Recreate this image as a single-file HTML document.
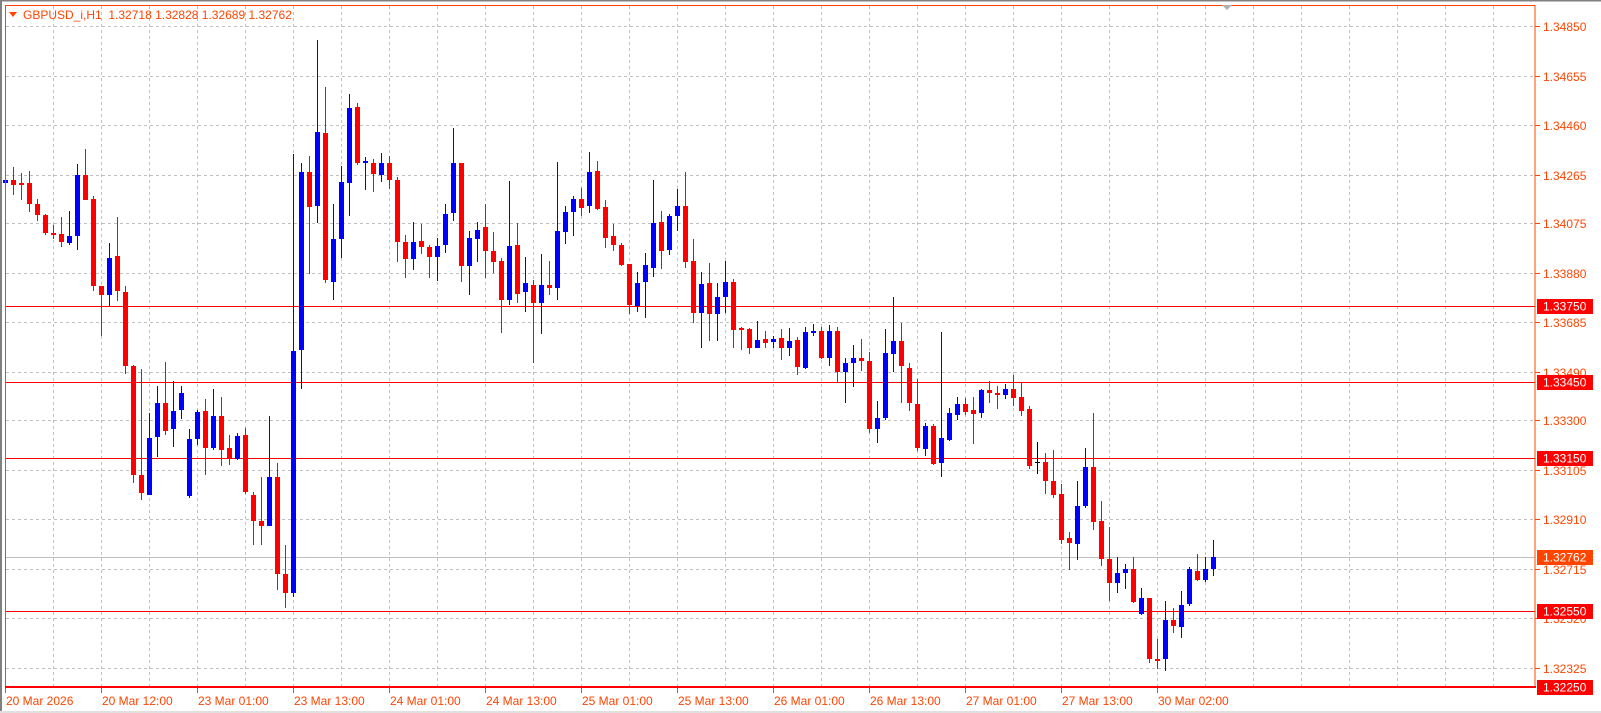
<!DOCTYPE html>
<html><head><meta charset="utf-8"><style>
html,body{margin:0;padding:0;background:#fff;overflow:hidden}
svg{display:block}
text{font-family:"Liberation Sans",sans-serif;font-size:12px}
</style></head><body>
<svg id="s" width="1601" height="713" viewBox="0 0 1601 713" xmlns="http://www.w3.org/2000/svg">
<rect x="0" y="0" width="1601" height="713" fill="#fff"/>
<line x1="0" y1="0.5" x2="1601" y2="0.5" stroke="#808080" stroke-width="2"/>
<line x1="1" y1="0" x2="1" y2="713" stroke="#808080" stroke-width="2"/>
<line x1="0" y1="712" x2="1601" y2="712" stroke="#e0e0e0" stroke-width="2"/>
<g id="grid"></g>
<g id="hl"></g>
<g id="c"></g>
<rect x="5.5" y="5.5" width="1529.5" height="681" fill="none" stroke="#FF4500" stroke-width="1"/>
<line x1="5" y1="687" x2="1536" y2="687" stroke="#FF0000" stroke-width="2"/>
<polygon points="1222,5 1232,5 1227,10" fill="#b0b0b0"/>
<polygon points="9,12 17,12 13,17" fill="#FF4500"/>
<text x="23" y="19" fill="#FF4500">GBPUSD_i,H1&#160;&#160;1.32718 1.32828 1.32689 1.32762</text>
<g id="ax"></g>
</svg>
<script>
var NS="http://www.w3.org/2000/svg";
function el(p,t,a,txt){var e=document.createElementNS(NS,t);for(var k in a)e.setAttribute(k,a[k]);if(txt)e.textContent=txt;document.getElementById(p).appendChild(e);return e;}
function Y(p){return 26+(1.34850-p)*25426;}
// grid
for(var k=1;k<=31;k++){var x=5+48*k+0.5;el("grid","line",{x1:x,y1:6,x2:x,y2:686,stroke:"#c0c0c0","stroke-dasharray":"3,3"});}
var ticks=["1.34850","1.34655","1.34460","1.34265","1.34075","1.33880","1.33685","1.33490","1.33300","1.33105","1.32910","1.32715","1.32520","1.32325"];
ticks.forEach(function(t){var y=Math.round(Y(parseFloat(t)))+0.5;
 el("grid","line",{x1:6,y1:y,x2:1535,y2:y,stroke:"#c0c0c0","stroke-dasharray":"3,3"});
 el("ax","line",{x1:1535,y1:y,x2:1540,y2:y,stroke:"#FF4500"});
 el("ax","text",{x:1543,y:y+4.5,fill:"#FF4500"},t);});
// time axis
var tl=["20 Mar 2026","20 Mar 12:00","23 Mar 01:00","23 Mar 13:00","24 Mar 01:00","24 Mar 13:00","25 Mar 01:00","25 Mar 13:00","26 Mar 01:00","26 Mar 13:00","27 Mar 01:00","27 Mar 13:00","30 Mar 02:00"];
tl.forEach(function(t,i){var x=5+96*i;el("ax","line",{x1:x+0.5,y1:688,x2:x+0.5,y2:693,stroke:"#FF4500"});el("ax","text",{x:x+1,y:705,fill:"#FF4500"},t);});
// horizontal lines
[1.33750,1.33450,1.33150,1.32550].forEach(function(p){var y=Math.round(Y(p))+0.5;el("hl","line",{x1:6,y1:y,x2:1535,y2:y,stroke:"#FF0000"});});
var gy=Math.round(Y(1.32762))+0.5;el("hl","line",{x1:6,y1:gy,x2:1535,y2:gy,stroke:"#c0c0c0"});
function box(p,t,c){var y=Math.round(Y(p));el("ax","rect",{x:1537,y:y-7,width:56,height:15,fill:c});el("ax","text",{x:1543,y:y+4.5,fill:"#fff"},t);}
box(1.32762,"1.32762","#FF4500");box(1.33750,"1.33750","#FF0000");box(1.33450,"1.33450","#FF0000");box(1.33150,"1.33150","#FF0000");box(1.32550,"1.32550","#FF0000");box(1.32250,"1.32250","#FF0000");
// candles: [color,hi,lo,bt,bb] in zoom coords
var A=[["b",288,410,398,408],["r",364,438,399,411],["r",380,452,407,411],["r",375,485,407,464],["r",449,507,462,493],["r",489,545,492,541],["r",518,557,539,546],["r",497,576,542,565],["b",481,571,547,566],["b",356,584,385,549],["r",316,453,385,453],["r",441,695,449,682],["r",680,815,680,706],["b",566,733,606,706],["r",497,722,601,695],["r",680,916,696,895],["r",890,1206,893,1184],["r",901,1251,1184,1232],["b",1018,1238,1084,1236],["b",946,1135,991,1083],["r",882,1078,991,1066],["b",933,1110,1013,1062],["b",946,1034,965,1012],["b",1062,1245,1087,1240],["b",1010,1103,1015,1089],["r",981,1184,1013,1113],["b",954,1116,1026,1113],["r",975,1161,1026,1118],["r",1076,1156,1113,1142],["b",1071,1144,1079,1142],["r",1058,1235,1076,1229],["r",1228,1370,1236,1307],["r",1188,1370,1305,1320],["b",1026,1320,1188,1320],["r",1151,1490,1188,1447],["r",1371,1538,1448,1498],["b",331,1508,853,1498],["b",353,956,377,852],
["r",335,650,377,472],["b",27,513,271,469],["r",151,673,274,666],["b",462,717,555,671],["b",361,606,404,557],["b",170,496,207,408],["r",194,359,205,355],["b",338,425,348,355],["r",343,432,355,382],["b",327,403,353,387],["r",335,422,353,400],["r",390,617,398,565],["r",545,661,563,610],["b",510,639,563,610],["r",515,597,561,578],["r",571,661,577,605],["b",553,667,574,605],["b",462,592,489,573],["b",260,509,353,486],["r",353,669,353,629],["b",534,706,553,629],["b",510,617,532,557],["r",462,659,524,589],["r",537,647,587,616],["r",606,807,614,717],["b",401,731,574,717],["r",513,727,571,701],["b",603,751,672,698],["r",666,887,678,725],["b",595,809,678,725],["r",614,706,678,685],["b",351,717,534,685],["b",468,569,484,538],["b",441,547,449,485],["r",420,494,449,473],["b",324,488,377,469],["r",348,480,375,475],["r",452,579,470,552],
["r",516,587,549,573],["r",566,627,573,625],["r",622,756,622,732],["b",643,749,672,733],["b",593,767,625,671],["b",399,656,513,634],["r",481,637,510,589],["b",489,598,494,586],["b",423,534,468,496],["r",377,634,468,616],["r",555,779,614,754],["b",643,845,675,754],["r",619,827,672,756],["b",672,827,710,756],["b",614,754,670,711],["r",662,845,670,799],["r",790,850,792,797],["r",792,863,795,847],["b",773,847,824,847],["r",800,847,821,833],["b",815,845,821,831],["r",795,879,819,845],["b",792,868,827,847],["r",816,919,824,897],["b",790,903,803,900],["b",781,815,800,804],["r",789,876,800,873],["b",784,895,800,873],["r",790,935,800,910],["b",872,993,885,910],["b",837,950,872,887],["r",821,908,872,881],["r",857,1071,880,1062],["b",986,1099,1031,1062],["b",795,1037,858,1033],["b",710,911,827,863],["r",780,993,827,895],["r",885,1014,898,993],["r",928,1120,994,1113]];
var B=[["b",948,1027,955,1010],["r",950,1048,955,1045],["b",729,1077,984,1044],["b",912,990,924,987],["b",885,940,902,928],["r",888,928,902,921],["r",885,998,917,925],["b",864,935,868,923],["r",845,900,868,876],["r",857,913,876,879],["b",852,890,866,880],["r",832,907,866,887],["r",848,930,885,918],["r",905,1058,914,1051],["k",994,1070,1040,1042],["r",1020,1118,1042,1087],["r",1013,1128,1087,1121],["r",1093,1239,1119,1229],["r",1211,1302,1225,1237],["b",1086,1278,1148,1239],["b",1008,1153,1052,1147],["r",924,1205,1052,1186],["r",1136,1292,1184,1275],["r",1197,1376,1274,1333],["b",1269,1357,1309,1333],["b",1286,1347,1300,1309],["r",1269,1380,1300,1379],["b",1344,1410,1368,1408],["r",1368,1526,1370,1516],["r",1467,1540,1515,1517],["b",1375,1545,1423,1516],["r",1392,1453,1423,1437],["b",1353,1466,1386,1439],["b",1294,1389,1300,1384],["r",1264,1327,1303,1325],["b",1270,1331,1298,1326],["b",1230,1316,1270,1298]];
var col={b:"#0000FF",r:"#FF0000",k:"#000000"};
function draw(arr,start,sc){arr.forEach(function(d,i){var k=start+i,cx=5+8*k;var f=function(v){return 30+v/sc;};
 var hi=Math.round(f(d[1])),lo=Math.round(f(d[2])),bt=Math.round(f(d[3])),bb=Math.round(f(d[4]));if(bb-bt<2)bb=bt+2;
 el("c","rect",{x:cx,y:hi,width:1,height:lo-hi,fill:col[d[0]]});
 if(d[0]=="k"){el("c","rect",{x:cx-2,y:bt,width:5,height:1,fill:col.k});}
 else el("c","rect",{x:cx-2,y:bt,width:5,height:bb-bt,fill:col[d[0]]});});}
draw(A,0,2.66);draw(B,115,2.41);
</script>
</body></html>
